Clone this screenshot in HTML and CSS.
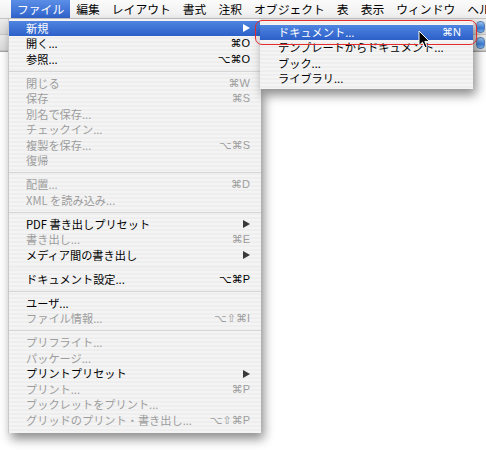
FILE: index.html
```html
<!DOCTYPE html>
<html lang="ja">
<head>
<meta charset="utf-8">
<link rel="stylesheet" href="styles.css">
</head>
<body>
<div class="screen">
  <div class="menubar">
    <span class="mb-item active">ファイル</span>
    <span class="mb-item">編集</span>
    <span class="mb-item">レイアウト</span>
    <span class="mb-item">書式</span>
    <span class="mb-item">注釈</span>
    <span class="mb-item">オブジェクト</span>
    <span class="mb-item">表</span>
    <span class="mb-item">表示</span>
    <span class="mb-item">ウィンドウ</span>
    <span class="mb-item">ヘル</span>
  </div>
  <div class="panel">
    <div class="panel-row"></div>
    <div class="panel-row"></div>
    <div class="steppers">
      <span class="stepper"></span>
      <span class="stepper"></span>
    </div>
  </div>
  <div class="desk"></div>

  <div class="menu main-menu">
    <div class="item hl"><span class="label">新規</span><span class="arrow"></span></div>
    <div class="item"><span class="label">開く...</span><span class="key">⌘O</span></div>
    <div class="item"><span class="label">参照...</span><span class="key">⌥⌘O</span></div>
    <div class="sep"></div>
    <div class="item off"><span class="label">閉じる</span><span class="key">⌘W</span></div>
    <div class="item off"><span class="label">保存</span><span class="key">⌘S</span></div>
    <div class="item off"><span class="label">別名で保存...</span></div>
    <div class="item off"><span class="label">チェックイン...</span></div>
    <div class="item off"><span class="label">複製を保存...</span><span class="key">⌥⌘S</span></div>
    <div class="item off"><span class="label">復帰</span></div>
    <div class="sep"></div>
    <div class="item off"><span class="label">配置...</span><span class="key">⌘D</span></div>
    <div class="item off"><span class="label">XML を読み込み...</span></div>
    <div class="sep"></div>
    <div class="item"><span class="label">PDF 書き出しプリセット</span><span class="arrow"></span></div>
    <div class="item off"><span class="label">書き出し...</span><span class="key">⌘E</span></div>
    <div class="item"><span class="label">メディア間の書き出し</span><span class="arrow"></span></div>
    <div class="sep faint"></div>
    <div class="item"><span class="label">ドキュメント設定...</span><span class="key">⌥⌘P</span></div>
    <div class="sep"></div>
    <div class="item"><span class="label">ユーザ...</span></div>
    <div class="item off"><span class="label">ファイル情報...</span><span class="key">⌥⇧⌘I</span></div>
    <div class="sep"></div>
    <div class="item off"><span class="label">プリフライト...</span></div>
    <div class="item off"><span class="label">パッケージ...</span></div>
    <div class="item"><span class="label">プリントプリセット</span><span class="arrow"></span></div>
    <div class="item off"><span class="label">プリント...</span><span class="key">⌘P</span></div>
    <div class="item off"><span class="label">ブックレットをプリント...</span></div>
    <div class="item off"><span class="label">グリッドのプリント・書き出し...</span><span class="key">⌥⇧⌘P</span></div>
  </div>

  <div class="menu sub-menu">
    <div class="item hl"><span class="label">ドキュメント...</span><span class="key">⌘N</span></div>
    <div class="item"><span class="label">テンプレートからドキュメント...</span></div>
    <div class="item"><span class="label">ブック...</span></div>
    <div class="item"><span class="label">ライブラリ...</span></div>
  </div>

  <div class="annotation"></div>

  <svg class="cursor" width="13" height="20" viewBox="0 0 13 20">
    <path d="M1 1 L1 15.5 L4.5 12.2 L7 17.8 L9.2 16.8 L6.8 11.4 L11.4 11.4 Z" fill="#000" stroke="#fff" stroke-width="1" stroke-linejoin="round"/>
  </svg>
</div>
</body>
</html>
```

FILE: styles.css
```css
* { box-sizing: border-box; }

html, body {
  margin: 0;
  padding: 0;
  background: #ffffff;
}

.screen {
  position: relative;
  width: 486px;
  height: 450px;
  overflow: hidden;
  font-family: "Noto Sans CJK JP", "DejaVu Sans", sans-serif;
  color: #000;
}

.menubar {
  height: 19px;
  display: flex;
  align-items: stretch;
  padding-left: 11px;
  background: linear-gradient(#fbfbfb, #eeeeee);
  border-bottom: 1px solid #c4c4c4;
  white-space: nowrap;
  overflow: hidden;
}

.mb-item {
  padding: 0 6px;
  font-size: 11.8px;
  line-height: 18px;
  color: #000;
  flex: none;
}

.mb-item.active {
  color: #fff;
  background: linear-gradient(#5b8ee6, #2f63cc);
}

.panel {
  height: 33px;
  background: #e2e2e2;
  border-bottom: 1px solid #a8a8a8;
  position: relative;
  display: flex;
  flex-direction: column;
}

.panel-row {
  flex: 1;
  border-bottom: 1px solid #c6c6c6;
  background: linear-gradient(#ececec, #dadada);
}

.steppers {
  position: absolute;
  right: 1px;
  top: 2px;
  display: flex;
  flex-direction: column;
  gap: 4px;
}

.stepper {
  display: block;
  width: 9px;
  height: 12px;
  border-radius: 4px;
  background: linear-gradient(#9cc4f2, #3b7fd9 60%, #7fb2ee);
  border: 1px solid #5a7fb0;
}

.menu {
  position: absolute;
  background: repeating-linear-gradient(#f4f4f4 0, #f4f4f4 2px, #eeeeee 2px, #eeeeee 4px);
  box-shadow: 3px 6px 10px rgba(0, 0, 0, 0.45);
  font-size: 11.2px;
}

.main-menu {
  left: 8px;
  top: 19px;
  width: 253px;
  padding: 1.5px 0 4.5px 0;
  border-left: 1px solid #c8c8c8;
}

.sub-menu {
  left: 260px;
  top: 20px;
  width: 213px;
  padding: 4.5px 0 2.5px 0;
}

.item {
  height: 15.5px;
  line-height: 15.5px;
  display: flex;
  justify-content: space-between;
  align-items: center;
  padding: 0 11px 0 17px;
  white-space: nowrap;
  color: #000;
}

.sub-menu .item {
  padding: 0 12px 0 18px;
}

.item.off {
  color: #9d9d9d;
}

.item.hl {
  color: #fff;
  background: linear-gradient(#4f84e0, #2c60c9);
}

.key {
  font-family: "Liberation Sans", "DejaVu Sans", sans-serif;
  font-size: 11px;
}

.arrow {
  display: block;
  width: 0;
  height: 0;
  border-top: 4.5px solid transparent;
  border-bottom: 4.5px solid transparent;
  border-left: 7px solid #3a3a3a;
  margin-right: 0;
}

.item.hl .arrow {
  border-left-color: #fff;
}

.sep {
  height: 8.5px;
  display: flex;
  align-items: center;
}

.sep::after {
  content: "";
  display: block;
  width: 100%;
  height: 1px;
  background: #d6d6d6;
}

.sep.faint::after {
  background: #ececec;
}

.annotation {
  position: absolute;
  left: 255px;
  top: 20px;
  width: 222px;
  height: 25px;
  border: 1.5px solid #e42a2a;
  border-radius: 7px;
}

.cursor {
  position: absolute;
  left: 418px;
  top: 30px;
}
```
